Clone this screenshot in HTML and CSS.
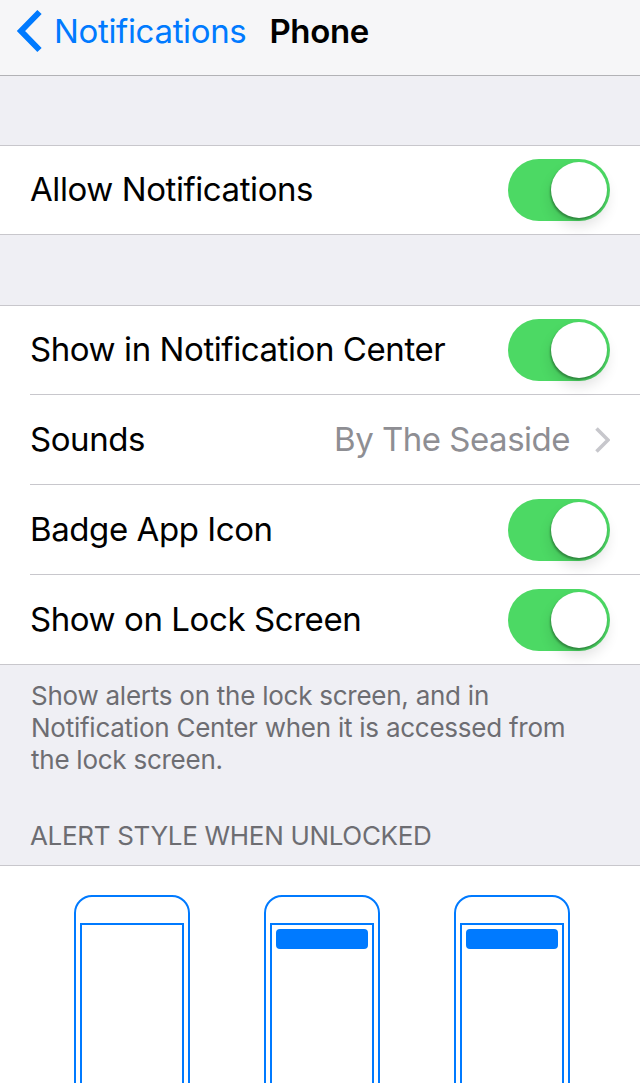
FILE: index.html
```html
<!DOCTYPE html>
<html lang="en">
<head>
<meta charset="utf-8">
<title>Phone</title>
<link rel="stylesheet" href="styles.css">
</head>
<body>
<div class="screen">
  <header class="nav">
    <svg class="back-icon" width="26" height="44" viewBox="0 0 26 44" aria-hidden="true"><path d="M23.5 3 L5 22 L23.5 41" fill="none" stroke="#007aff" stroke-width="6"/></svg>
    <span class="back-label">Notifications</span>
    <span class="nav-title">Phone</span>
  </header>
  <div class="spacer"></div>
  <section class="group">
    <div class="row"><span class="label">Allow Notifications</span><span class="switch"><span class="knob"></span></span></div>
  </section>
  <div class="spacer spacer-wide"></div>
  <section class="group">
    <div class="row"><span class="label">Show in Notification Center</span><span class="switch"><span class="knob"></span></span></div>
    <div class="row"><span class="label">Sounds</span><span class="detail">By The Seaside</span>
      <svg class="chevron" width="16" height="26" viewBox="0 0 16 26" aria-hidden="true"><path d="M2.5 1.5 L14 13 L2.5 24.5" fill="none" stroke="#c7c7cc" stroke-width="3.6"/></svg></div>
    <div class="row"><span class="label">Badge App Icon</span><span class="switch"><span class="knob"></span></span></div>
    <div class="row"><span class="label">Show on Lock Screen</span><span class="switch"><span class="knob"></span></span></div>
  </section>
  <p class="footnote">Show alerts on the lock screen, and in Notification Center when it is accessed from the lock screen.</p>
  <h2 class="caption">ALERT STYLE WHEN UNLOCKED</h2>
  <section class="styles">
    <div class="phone"><div class="phone-screen"></div></div>
    <div class="phone"><div class="phone-screen"><div class="banner"></div></div></div>
    <div class="phone"><div class="phone-screen"><div class="banner"></div></div></div>
  </section>
</div>
</body>
</html>
```
FILE: styles.css
```css
* { box-sizing: border-box; }
html, body { margin: 0; padding: 0; height: 100%; overflow: hidden; }
body { background: #efeff4; font-family: Inter, "Liberation Sans", sans-serif; color: #000; }
.screen { width: 640px; height: 1083px; overflow: hidden; }

.nav { height: 76px; background: #f6f6f8; border-bottom: 1px solid #b2b2b6; display: flex; align-items: center; padding: 0 0 13px 16px; }
.back-icon { flex: none; margin-right: 12px; }
.back-label { color: #007aff; font-size: 33px; letter-spacing: -0.34px; line-height: 40px; }
.nav-title { margin-left: 23px; font-size: 33px; font-weight: 600; letter-spacing: -0.35px; line-height: 40px; }

.spacer { height: 69px; }
.spacer-wide { height: 70px; }

.group { background: #fff; border-top: 1px solid #c8c7cc; border-bottom: 1px solid #c8c7cc; padding-left: 30px; }
.row { height: 90px; display: flex; align-items: center; padding-right: 30px; border-bottom: 1px solid #c8c7cc; }
.row:first-child { height: 89px; }
.row:last-child { height: 89px; border-bottom: 0; }
.row:only-child { height: 88px; }
.label { flex: 1; font-size: 33px; letter-spacing: -0.42px; line-height: 40px; padding-bottom: 2px; }
.detail { color: #8e8e93; font-size: 33px; letter-spacing: -0.5px; line-height: 40px; margin-right: 24px; padding-bottom: 2px; }
.chevron { flex: none; }

.switch { flex: none; width: 102px; height: 62px; border-radius: 31px; background: #4cd964; position: relative; }
.knob { position: absolute; top: 3px; right: 3px; width: 56px; height: 56px; border-radius: 50%; background: #fff; box-shadow: -1px 2px 2px rgba(0,0,0,.3), 0 8px 14px rgba(0,0,0,.12); }

.footnote { margin: 0; padding: 15px 30px 0 31px; font-size: 26px; line-height: 32px; color: #6d6d72; height: 153px; letter-spacing: -0.25px; }
.caption { margin: 0; padding-left: 30px; height: 47px; font-size: 26px; font-weight: 400; line-height: 36px; color: #6d6d72; letter-spacing: -0.32px; }

.styles { background: #fff; border-top: 1px solid #c8c7cc; padding: 29px 70px 0 74px; display: flex; gap: 74px; height: 300px; }
.phone { flex: none; width: 116px; height: 400px; border: 2px solid #007aff; border-radius: 18px 18px 0 0; padding: 26px 4px 0; }
.phone-screen { height: 100%; border: 2px solid #007aff; padding: 4px; }
.banner { height: 20px; border-radius: 4px; background: #007aff; }
```
